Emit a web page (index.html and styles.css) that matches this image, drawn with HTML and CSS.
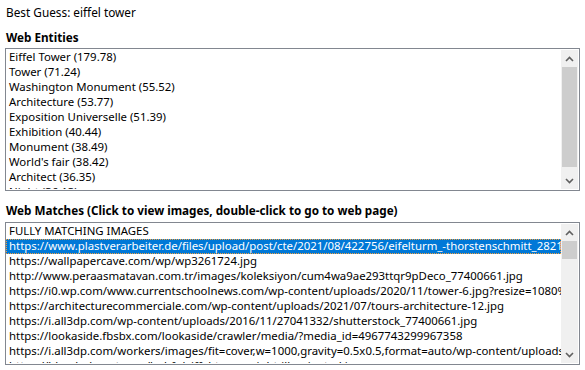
FILE: index.html
```html
<!DOCTYPE html>
<html>
<head>
<meta charset="utf-8">
<link rel="stylesheet" href="styles.css">
</head>
<body>
<div class="form">
  <div class="guess">Best Guess: eiffel tower</div>
  <div class="heading h-entities">Web Entities</div>
  <div class="listbox">
    <div class="items">
      <div class="item">Eiffel Tower (179.78)</div>
      <div class="item">Tower (71.24)</div>
      <div class="item">Washington Monument (55.52)</div>
      <div class="item">Architecture (53.77)</div>
      <div class="item">Exposition Universelle (51.39)</div>
      <div class="item">Exhibition (40.44)</div>
      <div class="item">Monument (38.49)</div>
      <div class="item">World's fair (38.42)</div>
      <div class="item">Architect (36.35)</div>
      <div class="item">Night (36.13)</div>
    </div>
    <div class="scrollbar">
      <div class="sb-btn"><svg width="9" height="6" viewBox="0 0 9 6"><polyline points="1,5 4.5,1.5 8,5" fill="none" stroke="#606060" stroke-width="1.6"/></svg></div>
      <div class="sb-track"><div class="sb-thumb thumb-entities"></div></div>
      <div class="sb-btn"><svg width="9" height="6" viewBox="0 0 9 6"><polyline points="1,1 4.5,4.5 8,1" fill="none" stroke="#606060" stroke-width="1.6"/></svg></div>
    </div>
  </div>
  <div class="heading h-matches">Web Matches (Click to view images, double-click to go to web page)</div>
  <div class="listbox">
    <div class="items">
      <div class="item">FULLY MATCHING IMAGES</div>
      <div class="item selected">https://www.plastverarbeiter.de/files/upload/post/cte/2021/08/422756/eifelturm_-thorstenschmitt_28217a9b.jpg</div>
      <div class="item">https://wallpapercave.com/wp/wp3261724.jpg</div>
      <div class="item">http://www.peraasmatavan.com.tr/images/koleksiyon/cum4wa9ae293ttqr9pDeco_77400661.jpg</div>
      <div class="item">https://i0.wp.com/www.currentschoolnews.com/wp-content/uploads/2020/11/tower-6.jpg?resize=1080%2C720&amp;ssl=1</div>
      <div class="item">https://architecturecommerciale.com/wp-content/uploads/2021/07/tours-architecture-12.jpg</div>
      <div class="item">https://i.all3dp.com/wp-content/uploads/2016/11/27041332/shutterstock_77400661.jpg</div>
      <div class="item">https://lookaside.fbsbx.com/lookaside/crawler/media/?media_id=4967743299967358</div>
      <div class="item">https://i.all3dp.com/workers/images/fit=cover,w=1000,gravity=0.5x0.5,format=auto/wp-content/uploads/2016/11/shutterstock.jpg</div>
      <div class="item">https://blog.hubspot.com/hubfs/eiffel-tower-night-illuminated.jpg</div>
    </div>
    <div class="scrollbar">
      <div class="sb-btn"><svg width="9" height="6" viewBox="0 0 9 6"><polyline points="1,5 4.5,1.5 8,5" fill="none" stroke="#606060" stroke-width="1.6"/></svg></div>
      <div class="sb-track"><div class="sb-thumb thumb-matches"></div></div>
      <div class="sb-btn"><svg width="9" height="6" viewBox="0 0 9 6"><polyline points="1,1 4.5,4.5 8,1" fill="none" stroke="#606060" stroke-width="1.6"/></svg></div>
    </div>
  </div>
</div>
</body>
</html>
```

FILE: styles.css
```css
html, body {
  margin: 0;
  padding: 0;
  background: #ffffff;
}

body {
  font-family: "Noto Sans", "Open Sans", sans-serif;
  font-size: 11.4px;
  color: #000000;
}

.form {
  display: flex;
  flex-direction: column;
  padding: 5px 5px 0 5px;
  width: 575px;
}

.guess {
  font-size: 11.8px;
  line-height: 14px;
  height: 15px;
  padding-left: 1px;
}

.heading {
  font-size: 11.7px;
  font-weight: bold;
  line-height: 14px;
  height: 15px;
  padding-left: 1px;
}

.h-entities {
  margin-top: 10px;
  margin-bottom: 3px;
}

.h-matches {
  margin-top: 12px;
  margin-bottom: 4px;
}

.listbox {
  display: flex;
  border: 1px solid #828790;
  padding: 1px 1px 1px 0;
  box-sizing: border-box;
  height: 143px;
  background: #ffffff;
}

.items {
  flex: 1;
  overflow: hidden;
  min-width: 0;
}

.item {
  height: 15px;
  line-height: 13px;
  box-sizing: border-box;
  padding: 0 0 2px 3px;
  white-space: nowrap;
  overflow: hidden;
}

.item.selected {
  background: #0078d7;
  color: #ffffff;
  outline: 1px dotted #f0a040;
  outline-offset: -1px;
}

.scrollbar {
  width: 17px;
  display: flex;
  flex-direction: column;
  background: #f0f0f0;
}

.sb-btn {
  height: 17px;
  display: flex;
  align-items: center;
  justify-content: center;
}

.sb-track {
  flex: 1;
  display: flex;
  flex-direction: column;
}

.sb-thumb {
  background: #cdcdcd;
  margin: 0 1px;
}

.thumb-entities {
  height: 100px;
}

.thumb-matches {
  height: 18px;
}
```
